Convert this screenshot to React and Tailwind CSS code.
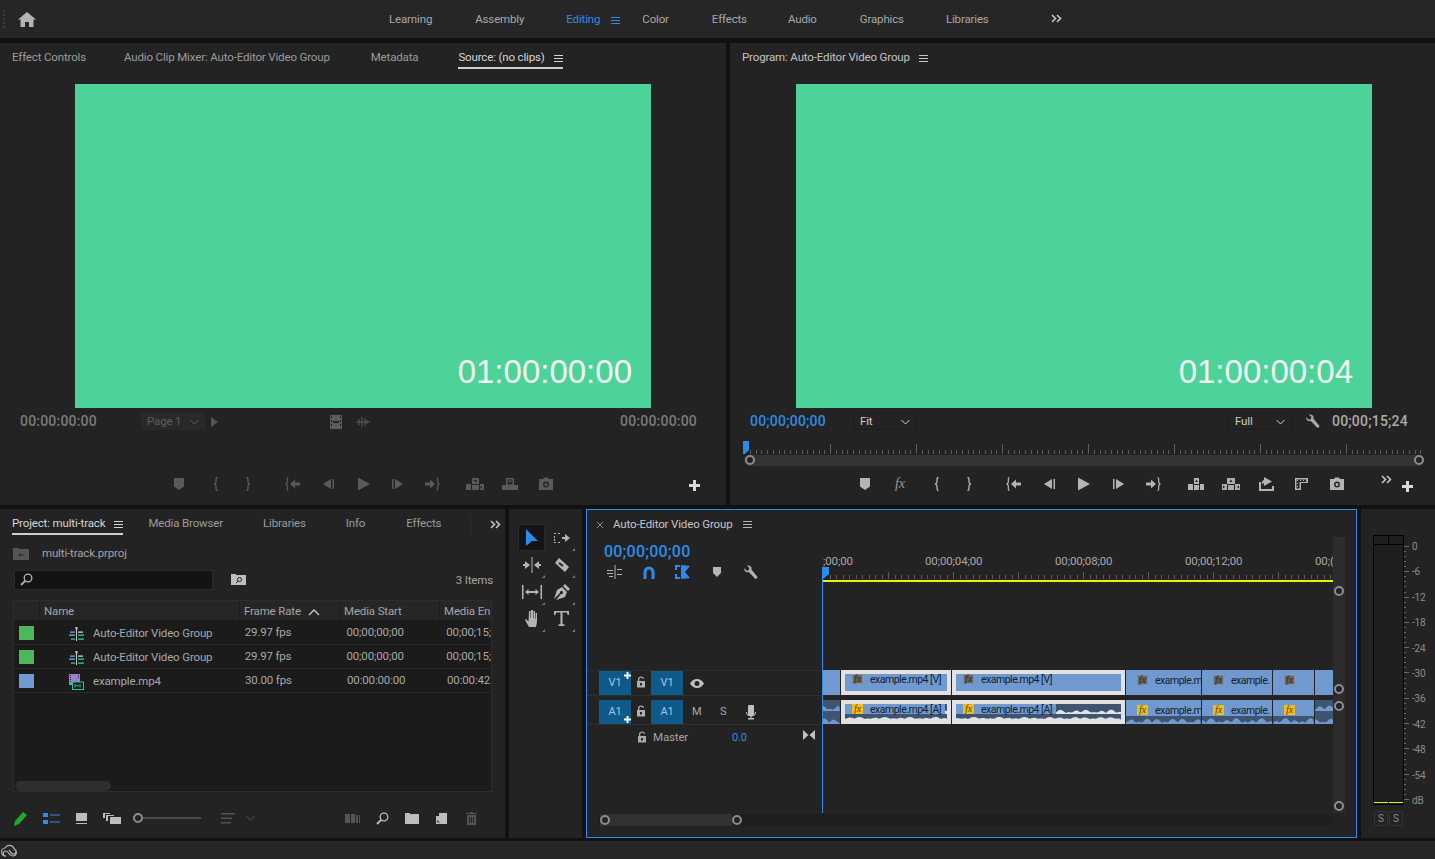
const Svg = ({ w = 16, h = 16, vb = "0 0 16 16", className = "", children }) => (
  <svg width={w} height={h} viewBox={vb} className={"shrink-0 block fill-current " + className}>
    {children}
  </svg>
);

const Burger = ({ className = "" }) => (
  <Svg w={9} h={9} vb="0 0 9 9" className={className}>
    <path d="M0 1h9v1H0zM0 4h9v1H0zM0 7h9v1H0z" />
  </Svg>
);

const Chevrons = ({ className = "" }) => (
  <svg width="11" height="9" viewBox="0 0 11 9" fill="none" stroke="currentColor" strokeWidth="1.6" className={"shrink-0 block " + className}>
    <path d="M1 1l3.5 3.5L1 8M6 1l3.5 3.5L6 8" />
  </svg>
);

const Chevron = ({ className = "" }) => (
  <svg width="9" height="6" viewBox="0 0 9 6" fill="none" stroke="currentColor" strokeWidth="1" className={"shrink-0 block " + className}>
    <path d="M.5 1l4 4 4-4" />
  </svg>
);

const Marker = () => <Svg><path d="M3 2h10v8.5L8 14l-5-3.500z" /></Svg>;
const BraceL = () => (
  <svg width="16" height="16" viewBox="0 0 16 16" fill="none" stroke="currentColor" strokeWidth="1.3" className="block shrink-0">
    <path d="M9.500 1.500C8 1.500 8 2.500 8 4v2.500L6.500 8 8 9.500V12c0 1.500 0 2.500 1.500 2.500" />
  </svg>
);
const BraceR = () => (
  <svg width="16" height="16" viewBox="0 0 16 16" fill="none" stroke="currentColor" strokeWidth="1.3" className="block shrink-0">
    <path d="M6.500 1.500C8 1.500 8 2.500 8 4v2.500L9.500 8 8 9.500V12c0 1.500 0 2.500-1.500 2.500" />
  </svg>
);
const GoIn = () => (
  <svg width="16" height="16" viewBox="0 0 16 16" className="block shrink-0 fill-current">
    <path d="M3.500 1.500C2.300 1.500 2.300 2.500 2.300 4v2.500L1 8l1.300 1.500V12c0 1.500 0 2.500 1.200 2.500" fill="none" stroke="currentColor" strokeWidth="1.200" />
    <path d="M5 8l5-4.500V6.500h5v3h-5v3z" />
  </svg>
);
const GoOut = () => (
  <svg width="16" height="16" viewBox="0 0 16 16" className="block shrink-0 fill-current">
    <path d="M12.500 1.500c1.200 0 1.200 1 1.200 2.500v2.500L15 8l-1.300 1.500V12c0 1.500 0 2.500-1.200 2.500" fill="none" stroke="currentColor" strokeWidth="1.200" />
    <path d="M11 8L6 3.500V6.500H1v3h5v3z" />
  </svg>
);
const StepBack = () => <Svg><path d="M11 3v10L3 8zM12.500 3H14v10h-1.500z" /></Svg>;
const Play = () => <Svg><path d="M3 1.500L15 8 3 14.500z" /></Svg>;
const StepFwd = () => <Svg><path d="M5 3v10l8-5zM2 3h1.500v10H2z" /></Svg>;
const Insert = () => (
  <Svg w={20} h={16} vb="0 0 20 16">
    <path d="M1 8h5v6H1zM7 2h7v6H7zM7 9h7v5H7zM15 8h4v6h-4z" />
    <path d="M8.500 4h4l-2 2.500z" className="fill-[#232323]" />
    <path d="M15.500 10v3l2-1.500z" className="fill-[#232323]" />
  </Svg>
);
const Overwrite = () => (
  <Svg w={20} h={16} vb="0 0 20 16">
    <path d="M6 2h8v7h4v5H2V9h4zM7.500 3.500v5h5v-5z" fillRule="evenodd" />
    <path d="M8 4.500h4l-2 2.500z" />
  </Svg>
);
const Lift = () => (
  <Svg w={20} h={16} vb="0 0 20 16">
    <path d="M2 8h5v6H2zM8 2h5v6H8zM8 9h5v5H8zM14 8h4v6h-4z" />
    <path d="M10.500 3.500l1.500 2.500H9z" className="fill-[#232323]" />
  </Svg>
);
const Extract = () => (
  <svg width="20" height="16" viewBox="0 0 20 16" className="block shrink-0 fill-current">
    <path d="M6 2h8v6H6zM1 8h5v6H1zM14 8h5v6h-5zM7 9h6v5H7z" opacity=".95" />
    <path d="M10 3.500l1.500 2.500h-3zM2 9.500v3l2-1.500zM18 9.500v3l-2-1.500z" className="fill-[#232323]" />
  </svg>
);
const ExportFrame = () => (
  <svg width="18" height="16" viewBox="0 0 18 16" className="block shrink-0 fill-current">
    <path d="M2 6h2v7h11v-3h2v5H2z" />
    <path d="M7 1l8 4.500-8 4.500V7C6 7 5 8 5 10V7c0-2 1-3 2-3z" />
  </svg>
);
const TrimRule = () => (
  <Svg>
    <path d="M2 2h13v5H8v7H2zM3.500 3.500v9h3V6h7V3.500z" fillRule="evenodd" />
    <path d="M4 4h1v1H4zM7 4h1v1H7zM10 4h1v1h-1zM13 4h1v1h-1zM4 7h1v1H4zM4 10h1v1H4z" />
  </Svg>
);
const Camera = () => (
  <Svg>
    <path d="M5 3l1-1.500h4L11 3h4v11H1V3zm3 2.500a3 3 0 100 6 3 3 0 000-6zm0 1.500a1.500 1.500 0 110 3 1.500 1.500 0 010-3z" fillRule="evenodd" />
  </Svg>
);
const Plus = ({ className = "", size = 11 }) => (
  <Svg w={size} h={size} vb="0 0 11 11" className={className}>
    <path d="M4 0h3v4h4v3H7v4H4V7H0V4h4z" />
  </Svg>
);
const Lock = ({ className = "" }) => (
  <svg width="10" height="12" viewBox="0 0 10 12" className={"block shrink-0 fill-current " + className}>
    <path d="M1 5h8v6.500H1zM4 7v2.500h2V7z" fillRule="evenodd" />
    <path d="M2 5V3.200C2 1.500 3.400.5 5 .5s2.900.8 3 2.500H6.800C6.700 2.300 6 1.800 5 1.800s-1.700.6-1.700 1.500V5z" />
  </svg>
);
const Wrench = ({ size = 16 }) => (
  <svg width={size} height={size} viewBox="0 0 16 16" className="block shrink-0 fill-current">
    <path d="M1.500 3.500L4 6l2.200-.5L6.700 3 4.200.800C6-.100 8.300.700 8.900 2.500c.3.800.2 1.600 0 2.200l6.200 7.600c.7.900-.1 2.300-1.400 2.300-.5 0-.9-.2-1.200-.6L6.200 7.500C4.300 8 2.200 7.200 1.500 5.300c-.2-.6-.200-1.200 0-1.800z" />
  </svg>
);
const Magnifier = ({ w = 13 }) => (
  <svg width={w} height={w} viewBox="0 0 13 13" fill="none" stroke="currentColor" strokeWidth="1.300" className="block shrink-0">
    <circle cx="8" cy="5" r="3.800" />
    <path d="M5.200 7.800L1 12" strokeWidth="1.800" />
  </svg>
);
const SequenceIcon = () => (
  <svg width="15" height="14" viewBox="0 0 15 14" className="block shrink-0">
    <path d="M6.500 0h2v2.500h-.500V14H7V2.500h-.500z" fill="#c8c8c8" />
    <path d="M1 4.500h5v1.200H1zM0 7.500h6v1.200H0z" fill="#7ab0e8" />
    <path d="M9 4.500h5v1.200H9z" fill="#e0e0e0" />
    <path d="M9 7.500h6v1.200H9zM9 11.500h6v1.200H9zM2 11.500h4v1.200H2z" fill="#26d49a" />
  </svg>
);
const ClipIcon = () => (
  <svg width="16" height="16" viewBox="0 0 16 16" className="block shrink-0">
    <path d="M0 0h11v11H0z" fill="#9b7fd8" />
    <path d="M1 1h1v1H1zM1 3h1v1H1zM1 5h1v1H1zM1 7h1v1H1zM9 1h1v1H9zM9 3h1v1H9z" fill="#232323" />
    <rect x="3.500" y="8" width="11" height="7.500" fill="#1b1b1b" stroke="#26c795" />
    <path d="M6 10v3.500M11 10v3.500M7 11.700h3" stroke="#26c795" fill="none" />
  </svg>
);

const PanelTab = ({ children, active, ml = "", menu }) => (
  <div className={"flex items-center gap-[9px] h-[19px] relative " + ml + (active ? " text-[#d6d6d6]" : " text-[#9c9c9c]")}>
    <span className="whitespace-nowrap">{children}</span>
    {menu && <Burger />}
    {active && <div className="absolute left-0 right-0 -bottom-[1px] h-[2px] bg-[#cfcfcf]" />}
  </div>
);

const Monitor = ({ time, className = "" }) => (
  <div className={"w-[576px] h-[324px] bg-[#4dd39a] flex items-end justify-end pr-[19px] pb-[16px] text-[33px] leading-[40px] tracking-normal text-[#f2f6f3] font-['Liberation_Sans',sans-serif] " + className}>
    {time}
  </div>
);

const Select = ({ label, className = "" }) => (
  <div className={"h-[17px] flex items-center justify-between px-[6px] rounded-[2px] border border-[#1c1c1c] bg-[#232323] text-[#cfcfcf] " + className}>
    <span>{label}</span>
    <Chevron />
  </div>
);

const Ruler = () => {
  const ticks = [];
  for (let i = 0; i < 118; i++) {
    const major = i % 15 === 14;
    ticks.push(<path key={i} d={`M${6.5 + Math.round(i * 5.73)} ${major ? 0 : 6}V10`} />);
  }
  return (
    <svg width="680" height="10" className="block" fill="none" stroke="#5c5c5c">
      {ticks}
    </svg>
  );
};

const SourcePanel = () => (
  <section className="w-[726px] bg-[#232323] flex flex-col">
    <div className="h-[28px] flex items-center pl-[12px] pt-[2px] text-[11.5px]">
      <PanelTab>Effect Controls</PanelTab>
      <PanelTab ml="ml-[38px]">Audio Clip Mixer: Auto-Editor Video Group</PanelTab>
      <PanelTab ml="ml-[41px]">Metadata</PanelTab>
      <PanelTab ml="ml-[40px]" active menu>Source: (no clips)</PanelTab>
    </div>
    <Monitor time="01:00:00:00" className="mt-[13px] ml-[75px]" />
    <div className="h-[27px] flex items-center pl-[20px] pr-[29px] text-[#7b7b7b] relative">
      <span className="text-[14px] font-medium tracking-[.2px] w-[121px]">00:00:00:00</span>
      <div className="w-[64px] h-[17px] bg-[#292929] text-[#5e5e5e] text-[11.5px] flex items-center justify-between px-[6px]">
        <span>Page 1</span>
        <Chevron />
      </div>
      <div className="ml-[6px] w-0 h-0 border-y-[5px] border-y-transparent border-l-[7px] border-l-[#555]" />
      <svg width="12" height="14" viewBox="0 0 12 14" className="ml-[112px] fill-[#5c5c5c] block">
        <path d="M0 0h12v14H0zM3 6v2h6V6zM1 1v2h1V1zM1 5v2h1V5zM1 9v2h1V9zM10 1v2h1V1zM10 5v2h1V5zM10 9v2h1V9z" fillRule="evenodd" />
      </svg>
      <svg width="14" height="10" viewBox="0 0 14 10" className="ml-[14px] block" stroke="#5c5c5c" fill="none">
        <path d="M0 5h14M3 2v6M6 0v10M9 1v8M11 3v4" />
      </svg>
      <span className="ml-auto text-[14px] font-medium tracking-[.2px]">00:00:00:00</span>
    </div>
    <div className="flex items-center h-[16px] mt-[41px] pl-[171px] text-[#5a5a5a]">
      <Marker />
      <div className="ml-[21px]"><BraceL /></div>
      <div className="ml-[16px]"><BraceR /></div>
      <div className="ml-[29px]"><GoIn /></div>
      <div className="ml-[19px]"><StepBack /></div>
      <div className="ml-[19px]"><Play /></div>
      <div className="ml-[19px]"><StepFwd /></div>
      <div className="ml-[18px]"><GoOut /></div>
      <div className="ml-[25px]"><Insert /></div>
      <div className="ml-[15px]"><Overwrite /></div>
      <div className="ml-[18px]"><Camera /></div>
      <Plus className="ml-[135px] text-[#d8d8d8] mt-[3px]" />
    </div>
  </section>
);

const ProgramPanel = () => (
  <section className="flex-1 min-w-0 bg-[#232323] flex flex-col">
    <div className="h-[28px] flex items-center pl-[12px] pt-[2px] text-[11.5px]">
      <div className="flex items-center gap-[9px] text-[#c4c4c4]">
        <span>Program: Auto-Editor Video Group</span>
        <Burger />
      </div>
    </div>
    <Monitor time="01:00:00:04" className="mt-[13px] ml-[66px]" />
    <div className="h-[27px] flex items-center pl-[20px] text-[#aaaaaa] text-[11.5px]">
      <span className="text-[14px] font-medium tracking-[.2px] text-[#2d8ceb] w-[103px]">00;00;00;00</span>
      <Select label="Fit" className="w-[64px]" />
      <Select label="Full" className="w-[64px] ml-[311px]" />
      <div className="ml-[13px] text-[#a8a8a8]"><Wrench size={15} /></div>
      <span className="ml-[12px] text-[14px] font-medium tracking-[.2px]">00;00;15;24</span>
    </div>
    <div className="relative h-[22px] mt-[9px] ml-[14px] mr-[11px] flex flex-col">
      <Ruler />
      <div className="absolute -left-[1px] -top-[3px] w-[6px] h-[13px] bg-[#2d8ceb] [clip-path:polygon(0_0,100%_0,100%_70%,30%_100%,0_100%)]" />
      <div className="absolute left-0 right-0 top-[11px] h-[11px] bg-[#343434] rounded-full" />
      <div className="absolute left-[1px] top-[11px] w-[10px] h-[10px] rounded-full border-2 border-[#8d8d8d] bg-[#232323]" />
      <div className="absolute right-0 top-[11px] w-[10px] h-[10px] rounded-full border-2 border-[#8d8d8d] bg-[#232323]" />
    </div>
    <div className="flex items-center h-[16px] mt-[10px] pl-[127px] text-[#b4b4b4]">
      <Marker />
      <span className="ml-[19px] w-[16px] text-center text-[14px] italic leading-none font-['Liberation_Serif',serif] text-[#9a9a9a]">fx</span>
      <div className="ml-[21px]"><BraceL /></div>
      <div className="ml-[16px]"><BraceR /></div>
      <div className="ml-[29px]"><GoIn /></div>
      <div className="ml-[19px]"><StepBack /></div>
      <div className="ml-[18px]"><Play /></div>
      <div className="ml-[20px]"><StepFwd /></div>
      <div className="ml-[18px]"><GoOut /></div>
      <div className="ml-[25px]"><Lift /></div>
      <div className="ml-[15px]"><Extract /></div>
      <div className="ml-[16px]"><ExportFrame /></div>
      <div className="ml-[18px]"><TrimRule /></div>
      <div className="ml-[20px]"><Camera /></div>
      <div className="ml-[36px] -mt-[9px] text-[#c4c4c4]"><Chevrons /></div>
      <Plus className="ml-[10px] text-[#d8d8d8] mt-[4px]" />
    </div>
  </section>
);

const projectRows = [
  { swatch: "bg-[#4cb85c]", icon: <SequenceIcon />, name: "Auto-Editor Video Group", rate: "29.97 fps", start: "00;00;00;00", end: "00;00;15;" },
  { swatch: "bg-[#4cb85c]", icon: <SequenceIcon />, name: "Auto-Editor Video Group", rate: "29.97 fps", start: "00;00;00;00", end: "00;00;15;" },
  { swatch: "bg-[#6f9bd1]", icon: <ClipIcon />, name: "example.mp4", rate: "30.00 fps", start: "00:00:00:00", end: "00:00:42" },
];

const ProjectPanel = () => (
  <section className="w-[505px] bg-[#232323] flex flex-col text-[11.5px]">
    <div className="h-[28px] flex items-center pl-[12px] pt-[2px]">
      <PanelTab active menu>Project: multi-track</PanelTab>
      <PanelTab ml="ml-[25px]">Media Browser</PanelTab>
      <PanelTab ml="ml-[40px]">Libraries</PanelTab>
      <PanelTab ml="ml-[40px]">Info</PanelTab>
      <PanelTab ml="ml-[41px]">Effects</PanelTab>
      <div className="ml-[29px] w-[1px] h-[19px] bg-[#2e2e2e]" />
      <Chevrons className="ml-[19px] text-[#c4c4c4]" />
    </div>
    <div className="h-[16px] mt-[9px] flex items-center pl-[13px] text-[#a4a4a4]">
      <svg width="16" height="12" viewBox="0 0 16 12" className="block fill-[#555]">
        <path d="M0 0h6v1h10v11H0z" />
        <path d="M5 7l2.500-2V6.500H11v1H7.500V9z" fill="#2a2a2a" />
      </svg>
      <span className="ml-[13px]">multi-track.prproj</span>
    </div>
    <div className="h-[21px] mt-[7px] flex items-center pl-[14px] pr-[12px] text-[#a4a4a4]">
      <div className="w-[199px] h-[20px] bg-[#131313] border border-[#2a2a2a] rounded-[2px] flex items-center pl-[5px] text-[#b4b4b4]">
        <Magnifier />
      </div>
      <svg width="15" height="11" viewBox="0 0 15 11" className="block ml-[18px] fill-[#bdbdbd]">
        <path d="M0 0h5v1h10v10H0z" />
        <circle cx="8.500" cy="5.500" r="2" fill="none" stroke="#232323" />
        <path d="M7 7L5 9" stroke="#232323" />
      </svg>
      <span className="ml-auto mt-[2px]">3 Items</span>
    </div>
    <div className="h-[192px] mt-[10px] mx-[13px] bg-[#1b1b1b] border border-[#2c2c2c] flex flex-col overflow-hidden relative">
      <div className="h-[20px] shrink-0 bg-[#262626] border-b border-[#1b1b1b] flex items-center text-[#a4a4a4]">
        <div className="w-[26px] h-full border-r border-[#1e1e1e]" />
        <div className="w-[200px] h-full pl-[4px] pt-[2px] border-r border-[#1e1e1e] flex items-center">Name</div>
        <div className="w-[100px] h-full pl-[4px] pt-[2px] border-r border-[#1e1e1e] flex items-center">
          <span>Frame Rate</span>
          <svg width="12" height="7" viewBox="0 0 12 7" fill="none" stroke="#c8c8c8" strokeWidth="1.300" className="block ml-[7px] mt-[2px]">
            <path d="M1 6l5-5 5 5" />
          </svg>
        </div>
        <div className="w-[100px] h-full pl-[4px] pt-[2px] border-r border-[#1e1e1e] flex items-center">Media Start</div>
        <div className="pl-[4px] mt-[2px] whitespace-nowrap">Media En</div>
      </div>
      {projectRows.map((row, i) => (
        <div key={i} className="h-[24px] shrink-0 border-b border-[#2a2a2a] flex items-center text-[#a8a8a8]">
          <div className="w-[26px] pl-[5px]"><div className={"w-[15px] h-[14px] " + row.swatch} /></div>
          <div className="w-[200px] mt-[2px] flex items-center pl-[29px]">
            <div className="w-[24px]">{row.icon}</div>
            <span className="whitespace-nowrap">{row.name}</span>
          </div>
          <div className="w-[100px] mt-[1px] pl-[5px]">{row.rate}</div>
          <div className="w-[100px] mt-[1px] pl-[7px]">{row.start}</div>
          <div className="mt-[1px] pl-[7px] whitespace-nowrap">{row.end}</div>
        </div>
      ))}
      <div className="absolute left-[1px] bottom-0 w-[96px] h-[10px] rounded-full bg-[#2e2e2e]" />
    </div>
    <div className="h-[16px] mt-[18px] flex items-center pl-[13px] text-[#a8a8a8]">
      <svg width="15" height="15" viewBox="0 0 15 15" className="block fill-[#1faa2d]">
        <path d="M10 1l4 3-8 9-5 2 1-5z" />
      </svg>
      <svg width="17" height="11" viewBox="0 0 17 11" className="block ml-[15px] fill-[#2d8ceb]">
        <path d="M0 0h5v4H0zM0 7h5v4H0zM7 1.500h10v1H7zM7 8.500h10v1H7z" />
      </svg>
      <svg width="11" height="11" viewBox="0 0 11 11" className="block ml-[16px] fill-[#bdbdbd]">
        <path d="M0 0h11v8H0zM0 10h11v1H0z" />
      </svg>
      <svg width="18" height="11" viewBox="0 0 18 11" className="block ml-[16px] fill-[#bdbdbd]">
        <path d="M0 0h7v1H2v4H0zM3 2h8v1H5v5H3zM7 4h11v7H7z" />
      </svg>
      <div className="w-[10px] h-[10px] ml-[12px] rounded-full border-2 border-[#8d8d8d]" />
      <div className="w-[58px] h-[2px] bg-[#4a4a4a]" />
      <svg width="14" height="11" viewBox="0 0 14 11" className="block ml-[20px] fill-[#555]">
        <path d="M0 0h14v1.500H0zM0 4.500h11V6H0zM0 9h10v1.500H0z" />
      </svg>
      <Chevron className="ml-[11px] text-[#555]" />
      <svg width="15" height="9" viewBox="0 0 15 9" className="block ml-[90px] fill-[#555]">
        <path d="M0 0h5v9H0zM6 0h4v9H6zM11 1h2v8h-2zM14 1h1v8h-1z" />
      </svg>
      <div className="ml-[16px] text-[#bdbdbd]"><Magnifier /></div>
      <svg width="14" height="11" viewBox="0 0 14 11" className="block ml-[16px] fill-[#bdbdbd]">
        <path d="M0 0h5v1h9v10H0z" />
      </svg>
      <svg width="11" height="11" viewBox="0 0 11 11" className="block ml-[17px] fill-[#bdbdbd]">
        <path d="M3 0h8v11H0V3h3z" />
        <path d="M1 9V7l3 3z" fill="#232323" />
      </svg>
      <svg width="11" height="13" viewBox="0 0 11 13" className="block ml-[19px] fill-[#555]">
        <path d="M4 0h3v1h4v1H0V1h4zM1 3h9v10H1zM3 5v6h1V5zM5 5v6h1V5zM7 5v6h1V5z" fillRule="evenodd" />
      </svg>
    </div>
  </section>
);

const Corner = () => (
  <div className="absolute right-0 bottom-0 w-0 h-0 border-b-[3px] border-b-[#777] border-l-[3px] border-l-transparent" />
);

const Tool = ({ active, children }) => (
  <div className={"w-[27px] h-[27px] relative flex items-center justify-center rounded-[2px] " + (active ? "bg-[#141414] text-[#2d8ceb] border border-[#2a2a2a]" : "text-[#b4b4b4]")}>
    {children}
    {!active && <Corner />}
  </div>
);

const ToolsPanel = () => (
  <section className="w-[73px] ml-[4px] bg-[#232323] pt-[15px] pl-[9px] pr-[6px]">
    <div className="grid grid-cols-2 gap-x-[2px] auto-rows-[27px]">
      <Tool active><Svg w={13} h={17} vb="0 0 13 17"><path d="M1 0l12 12H7L1 17z" /></Svg></Tool>
      <Tool>
        <svg width="18" height="12" viewBox="0 0 18 12" className="block fill-current">
          <path d="M1 1h2v1H1zM5 1h2v1H5zM1 10h2v1H1zM5 10h2v1H5zM1 4h1v2H1zM1 7h1v2H1zM9 5h3V2l5 4-5 4V7H9z" />
        </svg>
      </Tool>
      <Tool>
        <svg width="18" height="16" viewBox="0 0 18 16" className="block fill-current">
          <path d="M8.500 0h1v16h-1zM7 8L2 4v3H0v2h2v3zM11 8l5-4v3h2v2h-2v3z" />
        </svg>
      </Tool>
      <Tool>
        <svg width="16" height="16" viewBox="0 0 16 16" className="block fill-current">
          <path d="M5 1l10 9-4 5L1 6z" />
          <path d="M5 6l4 3" stroke="#232323" strokeWidth="2" />
        </svg>
      </Tool>
      <Tool>
        <svg width="20" height="14" viewBox="0 0 20 14" className="block fill-current">
          <path d="M0 0h1.500v14H0zM18.500 0H20v14h-1.500zM3 7l3.500-3v2h7V4L17 7l-3.500 3V8h-7v2z" />
        </svg>
      </Tool>
      <Tool>
        <svg width="16" height="16" viewBox="0 0 16 16" className="block fill-current">
          <path d="M11 0l5 5-2 2-5-5zM8 3l5 5-2 5-9 3 5-6a1.500 1.500 0 10-1-1l-6 6 3-9z" />
        </svg>
      </Tool>
      <Tool>
        <svg width="16" height="17" viewBox="0 0 16 17" className="block fill-current">
          <path d="M5 1h1.500v7H7V0h2v8h.5V1H11v8h.500V3H13v9l-1 5H5L1 10l1-1 2.500 2.500z" />
        </svg>
      </Tool>
      <Tool>
        <svg width="15" height="15" viewBox="0 0 15 15" className="block fill-current">
          <path d="M0 0h15v4h-1.500C13.500 2 13 1.500 11.500 1.500H8.500V13l2 .5V15h-6v-1.500l2-.5V1.500H3.500C2 1.500 1.500 2 1.500 4H0z" />
        </svg>
      </Tool>
    </div>
  </section>
);

const wavePoints = (w, h, seed) => {
  let d = `M0 ${h}`;
  for (let x = 0; x <= w; x += 2) {
    const v = Math.abs(Math.sin(x * 0.37 + seed) + Math.sin(x * 0.13 + seed * 2) * 0.6);
    d += `L${x} ${Math.max(0, h - 1 - v * (h * 0.45))}`;
  }
  return d + `L${w} ${h}Z`;
};

const Wave = ({ w, h = 8, seed = 1, color = "#7099cf" }) => (
  <svg width={w} height={h} viewBox={`0 0 ${w} ${h}`} className="block">
    <path d={wavePoints(w, h, seed)} fill={color} />
  </svg>
);

const FxBadge = ({ audio }) => (
  <div className={"w-[11px] h-[10px] shrink-0 flex items-center justify-center text-[10px] italic leading-none tracking-normal font-['Liberation_Serif',serif] " + (audio ? "bg-[#f2bd1d] text-[#5a4500]" : "bg-[#666] border border-[#8c8c8c] text-[#2a2a2a]")}>
    fx
  </div>
);

const videoClips = [
  { w: "w-[17px]" },
  { w: "w-[110px]", sel: true, label: "example.mp4 [V]", fx: true },
  { w: "w-[173px]", sel: true, label: "example.mp4 [V]", fx: true },
  { w: "w-[75px]", label: "example.m", fx: true },
  { w: "w-[70px]", label: "example.", fx: true },
  { w: "w-[41px]", fx: true },
  { w: "w-[18px]" },
];

const audioClips = [
  { w: "w-[17px]", px: 17, plain: true },
  { w: "w-[110px]", px: 102, sel: true, label: "example.mp4 [A]", fx: true },
  { w: "w-[173px]", px: 165, sel: true, label: "example.mp4 [A]", fx: true },
  { w: "w-[75px]", px: 75, label: "example.m", fx: true },
  { w: "w-[70px]", px: 70, label: "example.", fx: true },
  { w: "w-[41px]", px: 41, fx: true },
  { w: "w-[18px]", px: 18, plain: true },
];

const VideoClip = ({ clip }) => (
  <div className={"h-full shrink-0 mr-[1px] bg-[#7099cf] relative " + clip.w + (clip.sel ? " border-[4px] border-[#e2e2e2]" : "")}>
    {clip.fx && (
      <div className={"flex items-center h-[10px] text-[10.5px] tracking-[-0.5px] text-[#14202e] whitespace-nowrap " + (clip.sel ? "pl-[7px]" : "mt-[5px] pl-[11px]")}>
        <FxBadge />
        {clip.label && <span className="ml-[7px] mt-[2px]">{clip.label}</span>}
      </div>
    )}
  </div>
);

const AudioClip = ({ clip, seed }) => (
  <div className={"h-full shrink-0 mr-[1px] bg-[#3e5470] relative overflow-hidden flex flex-col justify-between " + clip.w + (clip.sel ? " border-[4px] border-[#e2e2e2]" : "")}>
    {clip.sel && (
      <div className="flex items-center h-[10px] text-[10.5px] tracking-[-0.5px] text-[#14202e] whitespace-nowrap">
        <div className="flex items-center h-full shrink-0 pl-[7px] pr-[4px] bg-[#7099cf]">
          <FxBadge audio />
          <span className="ml-[7px] mt-[2px]">{clip.label}</span>
        </div>
        <div className="flex-1 min-w-0 overflow-hidden self-end"><Wave w={clip.px} h={5} seed={seed + 2} color="#e2e2e2" /></div>
      </div>
    )}
    {clip.fx && !clip.sel && (
      <div className="flex items-center h-[16px] pt-[4px] pl-[11px] text-[10.5px] tracking-[-0.5px] text-[#14202e] whitespace-nowrap bg-[#7099cf]">
        <FxBadge audio />
        {clip.label && <span className="ml-[7px] mt-[2px]">{clip.label}</span>}
      </div>
    )}
    {clip.plain && <div className="mt-[4px]"><Wave w={clip.px} h={7} seed={seed + 4} /></div>}
    <Wave w={clip.px} h={clip.sel ? 3 : 7} seed={seed} color={clip.sel ? "#e2e2e2" : "#7099cf"} />
  </div>
);

const rulerLabels = [
  { t: ";00;00", w: "w-[102px]" },
  { t: "00;00;04;00", w: "w-[130px]" },
  { t: "00;00;08;00", w: "w-[130px]" },
  { t: "00;00;12;00", w: "w-[130px]" },
  { t: "00;(", w: "" },
];

const TimelineRuler = () => {
  const ticks = [];
  for (let i = 0; i < 80; i++) {
    ticks.push(<path key={i} d={`M${Math.round(i * 6.5) + 0.5} ${i % 10 === 0 ? 0 : 3}V7`} />);
  }
  return (
    <svg width="510" height="7" fill="none" stroke="#5c5c5c" className="block">
      {ticks}
    </svg>
  );
};

const ScrollDot = ({ className = "" }) => (
  <div className={"absolute w-[10px] h-[10px] rounded-full border-2 border-[#8d8d8d] bg-[#232323] " + className} />
);

const TimelinePanel = () => (
  <section className="w-[771px] ml-[4px] border-[1.5px] border-[#2d8ceb] bg-[#232323] flex flex-col text-[11.5px]">
    <div className="h-[27px] shrink-0 flex items-center pl-[10px] pt-[2px] text-[#b4b4b4]">
      <svg width="6" height="6" viewBox="0 0 6 6" stroke="#8c8c8c" className="block"><path d="M0 0l6 6M6 0L0 6" /></svg>
      <span className="ml-[10px] text-[#c4c4c4]">Auto-Editor Video Group</span>
      <Burger className="ml-[11px]" />
    </div>
    <div className="flex-1 min-h-0 flex">
      <div className="w-[236px] shrink-0 flex flex-col">
        <div className="h-[133px] shrink-0 pl-[17px] pt-[5px]">
          <div className="text-[16px] leading-[20px] font-medium text-[#2d8ceb] tracking-[.2px]">00;00;00;00</div>
          <div className="flex items-center h-[16px] mt-[2px] pl-[3px] text-[#b4b4b4]">
            <svg width="16" height="14" viewBox="0 0 16 14" className="block fill-current">
              <path d="M7.500 0h1v14h-1zM0 5h6v1H0zM0 8h6v1H0zM10 4h5v1h-5zM10 9h5v1h-5zM2 11h4v1H2z" />
            </svg>
            <svg width="12" height="13" viewBox="0 0 12 13" fill="none" className="block ml-[20px]">
              <path d="M2 13V6a4 4 0 018 0v7" stroke="#2d8ceb" strokeWidth="3" />
            </svg>
            <svg width="15" height="14" viewBox="0 0 15 14" className="block ml-[20px] fill-[#2d8ceb]">
              <path d="M0 0h5v2H2v3H0zM0 9h2v3h3v2H0zM6 0l9 1-5 6 5 6-9 1z" />
            </svg>
            <div className="ml-[22px] w-[10px] h-[10px] overflow-hidden flex items-center justify-center">
              <svg width="10" height="10" viewBox="0 0 10 10" className="block fill-current"><path d="M1 0h8v6L5 10 1 6z" /></svg>
            </div>
            <div className="ml-[21px]"><Wrench size={15} /></div>
          </div>
        </div>
        <div className="h-[26px] shrink-0 border-y border-[#2e2e2e] flex items-center pl-[12px] text-[#a8c4e0] text-[11px]">
          <div className="w-[32px] h-[24px] pt-[1px] bg-[#0e5a8a] flex items-center justify-center relative">
            V1
            <Plus size={7} className="absolute top-[1px] right-0 text-white" />
          </div>
          <Lock className="ml-[5px] -mt-[3px] text-[#b0b0b0]" />
          <div className="ml-[5px] w-[32px] h-[24px] pt-[1px] bg-[#0e5a8a] flex items-center justify-center">V1</div>
          <svg width="14" height="9" viewBox="0 0 14 9" className="block ml-[7px] fill-[#c0c0c0]">
            <path d="M7 0c3 0 5.500 2 7 4.500C12.500 7 10 9 7 9S1.500 7 0 4.500C1.500 2 4 0 7 0zm0 2a2.500 2.500 0 100 5 2.500 2.500 0 000-5z" fillRule="evenodd" />
          </svg>
        </div>
        <div className="h-[25px] mt-[4px] shrink-0 border-b border-[#2e2e2e] flex items-center pl-[12px] text-[#a8c4e0] text-[11px]">
          <div className="w-[32px] h-[24px] pt-[1px] bg-[#0e5a8a] flex items-center justify-center relative">
            A1
            <Plus size={7} className="absolute bottom-[1px] right-0 text-white" />
          </div>
          <Lock className="ml-[5px] -mt-[3px] text-[#b0b0b0]" />
          <div className="ml-[5px] w-[32px] h-[24px] pt-[1px] bg-[#0e5a8a] flex items-center justify-center">A1</div>
          <span className="ml-[9px] mt-[1px] w-[9px] text-[#a8a8a8]">M</span>
          <span className="ml-[19px] mt-[1px] text-[#a8a8a8]">S</span>
          <svg width="10" height="15" viewBox="0 0 10 15" className="block ml-[20px] fill-[#c0c0c0]">
            <path d="M3 0h4a1 1 0 011 1v7a3 3 0 01-6 0V1a1 1 0 011-1zM0 7h1c0 2 1.500 3.500 4 3.500S9 9 9 7h1c0 2.500-1.700 4.300-4.500 4.500V13H8v1.500H2V13h2.500v-1.500C1.700 11.300 0 9.500 0 7z" />
          </svg>
        </div>
        <div className="h-[24px] shrink-0 flex items-center pl-[50px] pt-[2px] text-[#a4a4a4]">
          <Lock className="-mt-[2px] text-[#a8a8a8]" />
          <span className="ml-[6px] w-[79px]">Master</span>
          <span className="text-[#2d8ceb] text-[11px] mt-[1px]">0.0</span>
          <svg width="12" height="10" viewBox="0 0 12 10" className="block ml-[56px] -mt-[7px] fill-[#c0c0c0]">
            <path d="M0 0l5.500 5L0 10zM12 0L6.500 5 12 10z" />
          </svg>
        </div>
      </div>
      <div className="w-[510px] shrink-0 flex flex-col relative">
        <div className="h-[45px] shrink-0 flex flex-col">
          <div className="flex mt-[17px] h-[14px] leading-[14px] text-[11.5px] text-[#a8a8a8] overflow-hidden whitespace-nowrap">
            {rulerLabels.map((l) => (
              <span key={l.t} className={"shrink-0 text-left " + l.w}>{l.t}</span>
            ))}
          </div>
          <div className="h-[7px] mt-[4px]"><TimelineRuler /></div>
          <div className="h-[2px] mt-[1px] bg-[#eeee00]" />
        </div>
        <div className="h-[88px] shrink-0" />
        <div className="h-[25px] shrink-0 flex overflow-hidden">
          {videoClips.map((c, i) => <VideoClip key={i} clip={c} />)}
        </div>
        <div className="h-[24px] mt-[5px] shrink-0 flex overflow-hidden">
          {audioClips.map((c, i) => <AudioClip key={i} clip={c} seed={i * 1.7 + 1} />)}
        </div>
        <div className="absolute -left-[1px] top-[31px] bottom-0 w-[1px] bg-[#2d8ceb]" />
        <div className="absolute -left-[1px] top-[30px] w-[7px] h-[11px] bg-[#2d8ceb] [clip-path:polygon(0_0,100%_0,100%_65%,30%_100%,0_100%)]" />
      </div>
      <div className="w-[12px] shrink-0 bg-[#2c2c2c] relative">
        <ScrollDot className="left-[1px] top-[49px]" />
        <ScrollDot className="left-[1px] top-[147px]" />
        <ScrollDot className="left-[1px] top-[164px]" />
        <ScrollDot className="left-[1px] top-[264px]" />
      </div>
    </div>
    <div className="h-[24px] shrink-0 pl-[10px] pr-[24px] pt-[1px]">
      <div className="h-[12px] rounded-full bg-[#1e1e1e] relative">
        <div className="absolute left-[3px] top-0 h-[12px] w-[132px] bg-[#323232]" />
        <ScrollDot className="left-[3px] top-[1px]" />
        <ScrollDot className="left-[135px] top-[1px]" />
      </div>
    </div>
  </section>
);

const dbLabels = ["0", "-6", "-12", "-18", "-24", "-30", "-36", "-42", "-48", "-54", "dB"];

const MeterTicks = () => {
  const ticks = [];
  for (let i = 0; i <= 50; i++) {
    ticks.push(<path key={i} d={`M0 ${Math.round(i * 5.06) + 0.5}H${i % 5 === 0 ? 5 : 2}`} />);
  }
  return (
    <svg width="5" height="255" fill="none" stroke="#6a6a6a" className="block">
      {ticks}
    </svg>
  );
};

const MetersPanel = () => (
  <section className="flex-1 min-w-0 ml-[4px] bg-[#232323] pt-[26px] pl-[12px] text-[#8c8c8c] text-[10px]">
    <div className="flex">
      <div className="w-[31px] h-[270px] border border-black bg-[#1e1e1e] flex flex-col">
        <div className="h-[9px] border-b border-black flex">
          <div className="flex-1 border-r border-black" />
          <div className="flex-1" />
        </div>
        <div className="flex-1 flex items-end pb-[1px] gap-[1px]">
          <div className="flex-1 h-[1px] bg-[#eeee00]" />
          <div className="flex-1 h-[1px] bg-[#eeee00]" />
        </div>
      </div>
      <div className="mt-[11px]"><MeterTicks /></div>
      <div className="h-[266px] mt-[6px] ml-[3px] flex flex-col justify-between leading-[12px]">
        {dbLabels.map((d) => <span key={d}>{d}</span>)}
      </div>
    </div>
    <div className="flex gap-[1px] mt-[4px] pl-[1px]">
      <div className="w-[14px] h-[15px] border border-[#333] rounded-[2px] flex items-center justify-center">S</div>
      <div className="w-[14px] h-[15px] border border-[#333] rounded-[2px] flex items-center justify-center">S</div>
    </div>
  </section>
);

const workspaces = [
  { name: "Learning", ml: "" },
  { name: "Assembly", ml: "ml-[43px]" },
];
const workspacesAfter = [
  { name: "Color", ml: "ml-[22px]" },
  { name: "Effects", ml: "ml-[43px]" },
  { name: "Audio", ml: "ml-[41px]" },
  { name: "Graphics", ml: "ml-[43px]" },
  { name: "Libraries", ml: "ml-[42px]" },
];

const TopBar = () => (
  <header className="h-[38px] mb-[1px] shrink-0 bg-[#262626] flex items-center text-[11.5px] text-[#a8a8a8]">
    <div className="ml-[3px] h-[18px] border-l-2 border-dotted border-[#3c3c3c]" />
    <svg width="18" height="15" viewBox="0 0 18 15" className="block ml-[13px] fill-[#b4b4b4]">
      <path d="M9 0l9 7.500h-2.500V15H11v-5H7v5H2.500V7.500H0z" />
    </svg>
    <div className="ml-[353px] mt-[2px] flex items-center">
      {workspaces.map((w) => <span key={w.name} className={w.ml}>{w.name}</span>)}
      <span className="ml-[42px] text-[#2d8ceb]">Editing</span>
      <Burger className="ml-[11px] text-[#2d8ceb]" />
      {workspacesAfter.map((w) => <span key={w.name} className={w.ml}>{w.name}</span>)}
      <Chevrons className="ml-[62px] -mt-[3px] text-[#c4c4c4]" />
    </div>
  </header>
);

export default function App() {
  return (
    <div className="w-[1435px] h-[859px] overflow-hidden bg-[#111111] flex flex-col font-['Roboto',sans-serif] tracking-[-0.15px]">
      <TopBar />
      <div className="h-[462px] mt-[4px] shrink-0 flex gap-[4px]">
        <SourcePanel />
        <ProgramPanel />
      </div>
      <div className="h-[329px] mt-[4px] shrink-0 flex">
        <ProjectPanel />
        <ToolsPanel />
        <TimelinePanel />
        <MetersPanel />
      </div>
      <footer className="h-[18px] mt-[3px] shrink-0 bg-[#262626] flex items-center pl-[1px]">
        <svg width="17" height="13" viewBox="0 0 17 13" fill="none" stroke="#b4b4b4" strokeWidth="1.200" className="block">
          <path d="M5 12a4 4 0 01-1-8A5 5 0 0113 4.500 4 4 0 0112.500 12C10 12 8 10 7 8.500 6.500 7.500 5.500 7 4.800 7a2.400 2.400 0 000 5zM8 6c1 1.500 2.500 4 4.500 4a2.400 2.400 0 000-5" />
        </svg>
      </footer>
    </div>
  );
}
